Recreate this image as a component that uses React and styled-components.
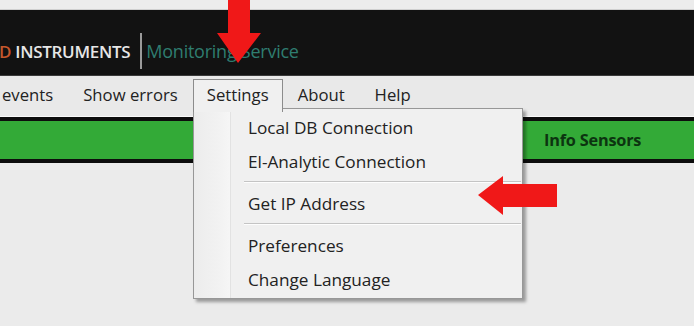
import React from 'react';
import styled, { createGlobalStyle } from 'styled-components';

const GlobalStyle = createGlobalStyle`
  html, body {
    margin: 0;
    padding: 0;
    background: #ebebeb;
    font-family: "Open Sans", "Noto Sans", sans-serif;
    overflow: hidden;
  }
`;

const menuItems = ['events', 'Show errors', 'Settings', 'About', 'Help'];

const dropdownGroups = [
  ['Local DB Connection', 'El-Analytic Connection'],
  ['Get IP Address'],
  ['Preferences', 'Change Language'],
];

function DownArrow() {
  return (
    <ArrowWrap style={{ left: 216, top: 0 }}>
      <svg width="46" height="64" viewBox="0 0 46 64">
        <polygon points="12,0 34,0 34,33 45,33 22,63 1,33 12,33" fill="#f01818" />
      </svg>
    </ArrowWrap>
  );
}

function LeftArrow() {
  return (
    <ArrowWrap style={{ left: 477, top: 175 }}>
      <svg width="82" height="42" viewBox="0 0 82 42">
        <polygon points="1,20 26,1 26,9 80,9 80,32 26,32 26,40" fill="#f01818" />
      </svg>
    </ArrowWrap>
  );
}

export default function App() {
  return (
    <>
      <GlobalStyle />
      <Window>
        <TopStrip />
        <Header>
          <Brand>
            <BrandAccent>D</BrandAccent> INSTRUMENTS
          </Brand>
          <Divider />
          <Product>Monitoring Service</Product>
        </Header>
        <MenuBar>
          {menuItems.map((item) => (
            <MenuItem key={item} active={item === 'Settings'}>
              {item}
            </MenuItem>
          ))}
        </MenuBar>
        <StatusBar>
          <StatusLabel>Info Sensors</StatusLabel>
        </StatusBar>

        <Dropdown>
          <Gutter />
          <DropList>
            {dropdownGroups.map((group, gi) => (
              <React.Fragment key={gi}>
                {gi > 0 && <Separator />}
                {group.map((label) => (
                  <DropItem key={label}>{label}</DropItem>
                ))}
              </React.Fragment>
            ))}
          </DropList>
        </Dropdown>

        <DownArrow />
        <LeftArrow />
      </Window>
    </>
  );
}

const Window = styled.div`
  position: relative;
  width: 694px;
  height: 326px;
  background: #ebebeb;
  display: flex;
  flex-direction: column;
`;

const TopStrip = styled.div`
  height: 9px;
  background: #ececec;
  border-bottom: 1px solid #cfcfcf;
`;

const Header = styled.div`
  height: 66px;
  background: #121212;
  display: flex;
  align-items: center;
  padding-top: 17px;
  box-sizing: border-box;
  border-bottom: 1px solid #3a3a3a;
`;

const Brand = styled.div`
  color: #e6e6e6;
  font-size: 17px;
  font-weight: 600;
  letter-spacing: -0.3px;
  margin-left: -1px;
`;

const BrandAccent = styled.span`
  color: #c5572c;
`;

const Divider = styled.div`
  width: 2px;
  height: 36px;
  background: #9a9a9a;
  margin: 0 4px 0 10px;
`;

const Product = styled.div`
  color: #2f7d70;
  font-size: 18px;
  font-weight: 400;
  letter-spacing: -0.25px;
`;

const MenuBar = styled.div`
  height: 41px;
  background: #e9e9e9;
  display: flex;
  align-items: flex-start;
  padding-left: 2px;
  border-bottom: 1px solid #fafafa;
  box-sizing: border-box;
`;

const MenuItem = styled.div`
  box-sizing: border-box;
  height: ${({ active }) => (active ? '33px' : '30px')};
  margin-top: 3px;
  padding: 0 ${({ active }) => (active ? '13px' : '15px')};
  padding-bottom: ${({ active }) => (active ? '3px' : '0')};
  display: flex;
  align-items: center;
  font-size: 16.7px;
  color: #222;
  background: ${({ active }) => (active ? '#f0f0f0' : 'transparent')};
  border: ${({ active }) => (active ? '1px solid #8c8c8c' : 'none')};
  border-bottom: none;
  position: relative;
  z-index: 3;
  &:first-child {
    padding-left: 0;
  }
`;

const StatusBar = styled.div`
  height: 46px;
  box-sizing: border-box;
  background: #33aa37;
  border-top: 4px solid #0d0d0d;
  border-bottom: 4px solid #0d0d0d;
  display: flex;
  align-items: center;
  padding-left: 544px;
`;

const StatusLabel = styled.div`
  font-size: 16.3px;
  font-weight: 700;
  color: #0c3410;
  letter-spacing: -0.2px;
`;

const Dropdown = styled.div`
  position: absolute;
  left: 193px;
  top: 108px;
  width: 330px;
  height: 191px;
  box-sizing: border-box;
  background: #f0f0f0;
  border: 1px solid #979797;
  box-shadow: 3px 3px 3px rgba(0, 0, 0, 0.35);
  display: flex;
  z-index: 2;
`;

const Gutter = styled.div`
  width: 36px;
  background: linear-gradient(90deg, #ececec 0%, #f2f2f2 70%, #f6f6f6 100%);
  border-right: 1px solid #e2e2e2;
`;

const DropList = styled.div`
  flex: 1;
  display: flex;
  flex-direction: column;
  padding-top: 1px;
`;

const DropItem = styled.div`
  height: 34px;
  display: flex;
  align-items: center;
  padding-left: 17px;
  font-size: 17.2px;
  color: #222;
`;

const Separator = styled.div`
  height: 1px;
  margin: 3px 1px 3px 13px;
  background: #c4c4c4;
  border-bottom: 1px solid #fdfdfd;
`;

const ArrowWrap = styled.div`
  position: absolute;
  z-index: 5;
  line-height: 0;
`;
